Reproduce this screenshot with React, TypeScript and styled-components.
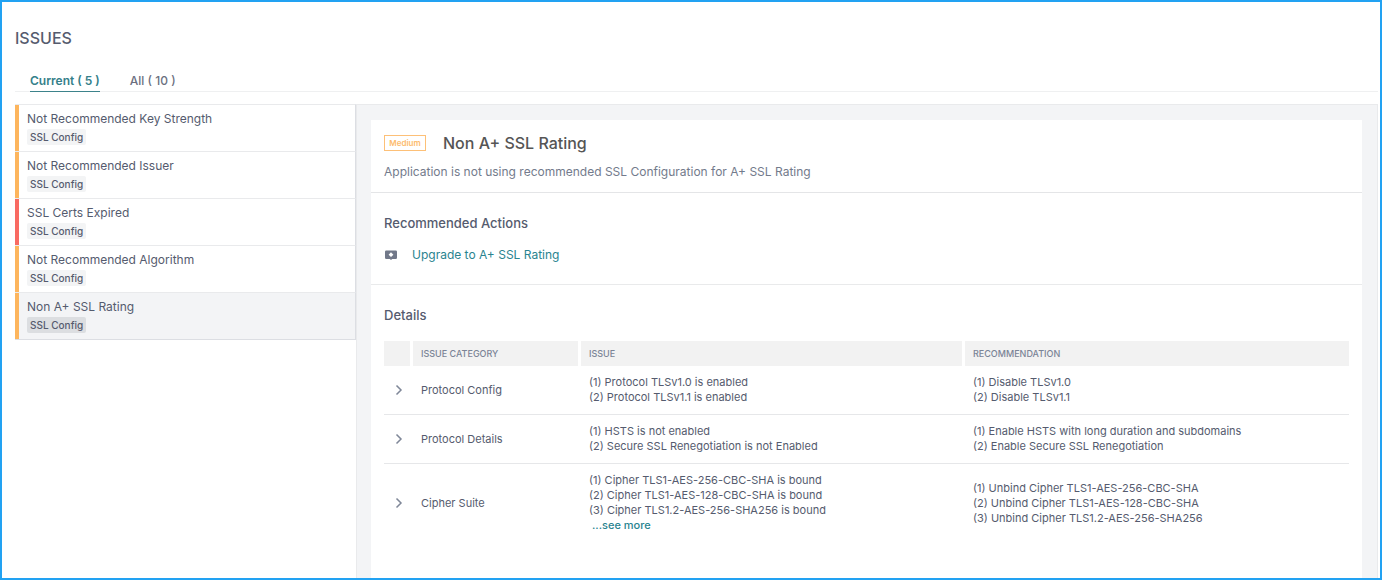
import React, { useState } from "react";
import styled, { createGlobalStyle } from "styled-components";

const GlobalStyle = createGlobalStyle`
  *, *::before, *::after { box-sizing: border-box; }
  body {
    margin: 0;
    background: #ffffff;
    color: #555b6e;
    font-family: Inter, "Liberation Sans", sans-serif;
    font-size: 12px;
    line-height: 16px;
  }
  h1, h2, h3, p, ul, ol { margin: 0; padding: 0; }
  ul, ol { list-style: none; }
  button { font: inherit; color: inherit; background: none; border: 0; padding: 0; cursor: pointer; }
`;

const Page = styled.main`
  display: flex;
  flex-direction: column;
  min-height: 100vh;
  border: 2px solid #22a2f2;
  padding: 24px 2px 0 13px;
`;

const PageTitle = styled.h1`
  font-size: 16px;
  line-height: 24px;
  font-weight: 500;
`;

const Tabs = styled.div`
  display: flex;
  gap: 30px;
  margin-top: 20px;
  padding-left: 15px;
  border-bottom: 1px solid #eff0f1;
`;

const Tab = styled.button<{ $active: boolean }>`
  padding: 3px 0 2px;
  margin-bottom: -1px;
  border-bottom: 1px solid ${(p) => (p.$active ? "#3d838b" : "transparent")};
  color: ${(p) => (p.$active ? "#34808a" : "#6b7080")};
  font-weight: ${(p) => (p.$active ? 600 : 500)};
`;

const Body = styled.div`
  display: flex;
  flex: 1;
  margin-top: 12px;
`;

const IssueList = styled.ul`
  flex: 0 0 341px;
`;

const IssueItem = styled.button<{ $color: string; $selected: boolean }>`
  display: flex;
  flex-direction: column;
  align-items: flex-start;
  gap: 2px;
  width: 100%;
  padding: 6px 8px 6px 12px;
  text-align: left;
  border-top: 1px solid #e9eaec;
  border-right: 1px solid #dcdee3;
  box-shadow: inset 4px 0 0 ${(p) => p.$color}${(p) => (p.$selected ? ", 0 1px 0 #dcdee3" : "")};
  background: ${(p) => (p.$selected ? "#f3f4f6" : "#ffffff")};
`;

const Tag = styled.span<{ $selected: boolean }>`
  padding: 0 3px;
  border-radius: 2px;
  font-size: 10px;
  font-weight: 500;
  background: ${(p) => (p.$selected ? "#dcdee1" : "#f3f4f5")};
`;

const DetailPane = styled.section`
  flex: 1;
  min-width: 0;
  display: flex;
  padding: 15px 15px 0 14px;
  background: #f3f4f6;
  border: 1px solid #e9eaec;
  border-bottom: 0;
`;

const Card = styled.article`
  flex: 1;
  min-width: 0;
  background: #ffffff;
`;

const CardHeader = styled.header`
  padding: 11px 13px 12px;
  border-bottom: 1px solid #e4e5e7;
`;

const TitleRow = styled.div`
  display: flex;
  align-items: center;
  gap: 17px;
`;

const Severity = styled.span`
  width: 42px;
  border: 1px solid #fdc078;
  color: #fdbb6c;
  font-size: 8px;
  line-height: 14px;
  font-weight: 600;
  text-align: center;
`;

const IssueTitle = styled.h2`
  color: #555555;
  font-size: 16px;
  line-height: 24px;
  font-weight: 500;
`;

const Summary = styled.p`
  margin-top: 9px;
  color: #737b8c;
`;

const Actions = styled.section`
  padding: 20px 13px 21px;
  border-bottom: 1px solid #e9eaeb;
`;

const SectionTitle = styled.h3`
  font-size: 13px;
  line-height: 20px;
  font-weight: 500;
`;

const ActionRow = styled.div`
  display: flex;
  align-items: center;
  gap: 14px;
  margin-top: 14px;
`;

const Link = styled.a`
  color: #2a8490;
  text-decoration: none;
`;

const Details = styled.section`
  padding: 20px 13px 36px;
`;

const Table = styled.table`
  width: 100%;
  margin-top: 16px;
  table-layout: fixed;
  border-collapse: separate;
  border-spacing: 0;
  font-size: 11px;
  line-height: 15px;
`;

const ExpandCol = styled.col`
  width: 29px;
`;

const CategoryCol = styled.col`
  width: 168px;
`;

const HeadCell = styled.th`
  height: 25px;
  padding: 0 8px;
  background: #f2f2f2;
  border-right: 3px solid #ffffff;
  color: #7b8496;
  font-size: 9px;
  font-weight: 500;
  text-align: left;

  &:last-child { border-right: 0; }
`;

const Cell = styled.td`
  padding: 9px 8px;
  vertical-align: middle;
  border-bottom: 1px solid #e6e7e9;

  tr:last-child > & { border-bottom: 0; }
`;

const ExpandCell = styled(Cell)`
  padding: 0;
  text-align: center;
`;

const ExpandButton = styled.button`
  display: flex;
  margin: 0 auto;
`;

const MoreLink = styled(Link)`
  padding-left: 3px;
  font-weight: 500;
`;

const issues = [
  { title: "Not Recommended Key Strength", color: "#fdb55d" },
  { title: "Not Recommended Issuer", color: "#fdb55d" },
  { title: "SSL Certs Expired", color: "#f96a62" },
  { title: "Not Recommended Algorithm", color: "#fdb55d" },
  { title: "Non A+ SSL Rating", color: "#fdb55d" },
];

const rows = [
  {
    category: "Protocol Config",
    found: ["Protocol TLSv1.0 is enabled", "Protocol TLSv1.1 is enabled"],
    advice: ["Disable TLSv1.0", "Disable TLSv1.1"],
    more: false,
  },
  {
    category: "Protocol Details",
    found: ["HSTS is not enabled", "Secure SSL Renegotiation is not Enabled"],
    advice: ["Enable HSTS with long duration and subdomains", "Enable Secure SSL Renegotiation"],
    more: false,
  },
  {
    category: "Cipher Suite",
    found: [
      "Cipher TLS1-AES-256-CBC-SHA is bound",
      "Cipher TLS1-AES-128-CBC-SHA is bound",
      "Cipher TLS1.2-AES-256-SHA256 is bound",
    ],
    advice: [
      "Unbind Cipher TLS1-AES-256-CBC-SHA",
      "Unbind Cipher TLS1-AES-128-CBC-SHA",
      "Unbind Cipher TLS1.2-AES-256-SHA256",
    ],
    more: true,
  },
];

const ActionIcon = () => (
  <svg width="14" height="10" viewBox="0 0 14 10" aria-hidden="true">
    <path
      d="M2.200 .5h9.600A1.200 1.200 0 0 1 13 1.700v6a1.200 1.200 0 0 1-1.200 1.200H8.200L7 10 5.800 8.900H2.200A1.200 1.200 0 0 1 1 7.700v-6A1.200 1.200 0 0 1 2.200.5z"
      fill="#717889"
    />
    <path d="M7 2.300 9.400 4.700 7 7.100 4.600 4.700z" fill="#ffffff" />
  </svg>
);

const Chevron = () => (
  <svg width="8" height="12" viewBox="0 0 8 12" fill="none" aria-hidden="true">
    <path d="M1.500 1.500 6 6 1.500 10.500" stroke="#7f8798" strokeWidth="1.500" />
  </svg>
);

const NumberedLines = ({ lines }: { lines: string[] }) => (
  <ol>
    {lines.map((line, i) => (
      <li key={line}>{`(${i + 1}) ${line}`}</li>
    ))}
  </ol>
);

export default function App() {
  const [tab, setTab] = useState(0);
  const [selected, setSelected] = useState(4);

  return (
    <>
      <GlobalStyle />
      <Page>
        <PageTitle>ISSUES</PageTitle>
        <Tabs role="tablist">
          {["Current ( 5 )", "All ( 10 )"].map((label, i) => (
            <Tab key={label} role="tab" aria-selected={tab === i} $active={tab === i} onClick={() => setTab(i)}>
              {label}
            </Tab>
          ))}
        </Tabs>
        <Body>
          <IssueList>
            {issues.map((issue, i) => (
              <li key={issue.title}>
                <IssueItem $color={issue.color} $selected={selected === i} onClick={() => setSelected(i)}>
                  <span>{issue.title}</span>
                  <Tag $selected={selected === i}>SSL Config</Tag>
                </IssueItem>
              </li>
            ))}
          </IssueList>
          <DetailPane>
            <Card>
              <CardHeader>
                <TitleRow>
                  <Severity>Medium</Severity>
                  <IssueTitle>Non A+ SSL Rating</IssueTitle>
                </TitleRow>
                <Summary>Application is not using recommended SSL Configuration for A+ SSL Rating</Summary>
              </CardHeader>
              <Actions>
                <SectionTitle>Recommended Actions</SectionTitle>
                <ActionRow>
                  <ActionIcon />
                  <Link href="#upgrade">Upgrade to A+ SSL Rating</Link>
                </ActionRow>
              </Actions>
              <Details>
                <SectionTitle>Details</SectionTitle>
                <Table>
                  <colgroup>
                    <ExpandCol />
                    <CategoryCol />
                    <col />
                    <col />
                  </colgroup>
                  <thead>
                    <tr>
                      <HeadCell aria-label="Expand" />
                      <HeadCell>ISSUE CATEGORY</HeadCell>
                      <HeadCell>ISSUE</HeadCell>
                      <HeadCell>RECOMMENDATION</HeadCell>
                    </tr>
                  </thead>
                  <tbody>
                    {rows.map((row) => (
                      <tr key={row.category}>
                        <ExpandCell>
                          <ExpandButton aria-label={`Expand ${row.category}`}>
                            <Chevron />
                          </ExpandButton>
                        </ExpandCell>
                        <Cell>{row.category}</Cell>
                        <Cell>
                          <NumberedLines lines={row.found} />
                          {row.more && <MoreLink href="#more">...see more</MoreLink>}
                        </Cell>
                        <Cell>
                          <NumberedLines lines={row.advice} />
                        </Cell>
                      </tr>
                    ))}
                  </tbody>
                </Table>
              </Details>
            </Card>
          </DetailPane>
        </Body>
      </Page>
    </>
  );
}
